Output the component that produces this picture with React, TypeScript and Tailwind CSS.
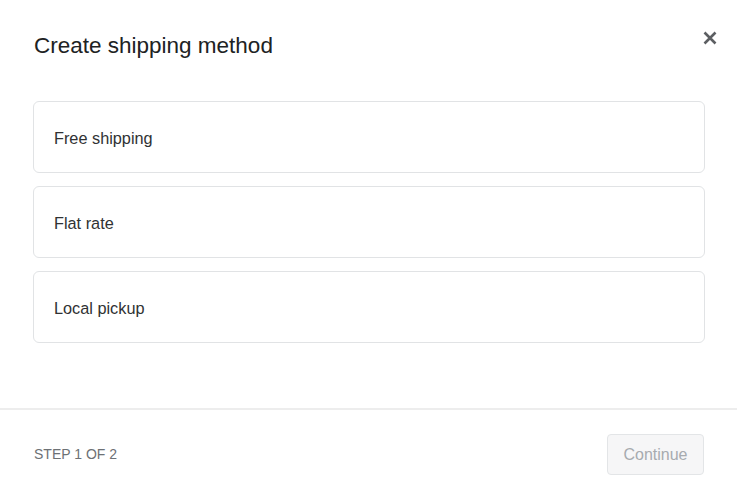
import React from 'react';

const methods = ['Free shipping', 'Flat rate', 'Local pickup'];

const App: React.FC = () => {
  return (
    <div className="h-screen w-full overflow-hidden bg-white text-[#202223]" style={{ fontFamily: '"Liberation Sans", Arial, sans-serif' }}>
      <div className="flex items-start justify-between pl-[34px] pr-[15px] pt-[32px]">
        <h1 className="text-[22.5px] leading-[28px] font-normal">Create shipping method</h1>
        <button className="mt-[-6px] flex h-6 w-6 items-center justify-center text-[#5c5f62]">
          <svg width="14" height="14" viewBox="0 0 14 14" fill="none">
            <path d="M1.5 1.5L12.5 12.5M12.5 1.5L1.5 12.5" stroke="currentColor" strokeWidth="2.6" strokeLinecap="butt" />
          </svg>
        </button>
      </div>

      <div className="flex flex-col gap-[13px] pl-[33px] pr-[32px] pt-[41px] pb-[65px]">
        {methods.map((m) => (
          <div
            key={m}
            className="flex h-[72px] items-center rounded-[6px] border border-[#e1e3e5] bg-white px-5 pt-[2px] text-[16.3px] text-[#303233]"
          >
            {m}
          </div>
        ))}
      </div>

      <div className="flex items-center justify-between border-t-2 border-[#ededed] pl-[34px] pr-[33px] pt-6 pb-6">
        <span className="text-[14px] text-[#6d7175]">STEP 1 OF 2</span>
        <button className="h-[41px] w-[97px] rounded-[4px] border border-[#e3e5e7] bg-[#f6f6f7] text-[16px] text-[#a7abaf]">
          Continue
        </button>
      </div>
    </div>
  );
};

export default App;
